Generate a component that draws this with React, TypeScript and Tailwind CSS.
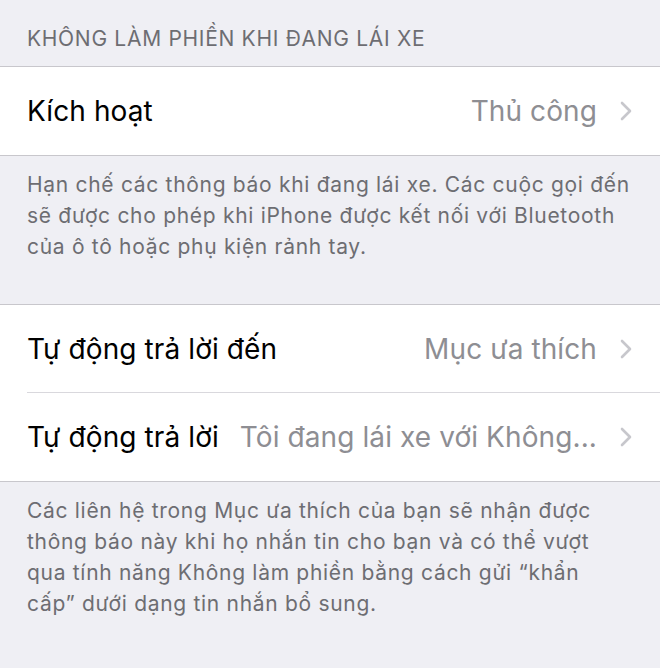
import React from "react";

function Chevron() {
  return (
    <svg width="14" height="20" viewBox="0 0 14 20" className="shrink-0">
      <path d="M3 2 L11 10 L3 18" fill="none" stroke="#c7c7cc" strokeWidth="2.6" strokeLinecap="round" strokeLinejoin="round" />
    </svg>
  );
}

function Row({ label, value, last }: { label: string; value: string; last?: boolean }) {
  return (
    <div className="pl-[27px] bg-white">
      <div className={`h-[88px] flex items-center pr-[27px] ${last ? "" : "border-b border-[#d9d8dd]"}`}>
        <span className="text-[28px] text-black whitespace-nowrap tracking-[0.1px]">{label}</span>
        <span className="flex-1 min-w-0 text-right text-[28px] text-[#8e8e93] whitespace-nowrap overflow-hidden pl-[20px] tracking-[0.1px]">
          {value}
        </span>
        <span className="ml-[22px] flex items-center">
          <Chevron />
        </span>
      </div>
    </div>
  );
}

export default function App() {
  return (
    <div className="w-[660px] h-[668px] bg-[#efeff4] font-['Inter','Liberation_Sans',sans-serif] overflow-hidden">
      <div className="h-[66px] px-[27px] flex items-end pb-[12px] text-[21px] text-[#6d6d72] tracking-[0.7px]">
        KHÔNG LÀM PHIỀN KHI ĐANG LÁI XE
      </div>
      <div className="border-y border-[#c8c7cc]">
        <Row label="Kích hoạt" value="Thủ công" last />
      </div>
      <div className="h-[148px] px-[27px] pt-[13px] text-[21px] leading-[31px] text-[#6d6d72] tracking-[0.7px]">
        Hạn chế các thông báo khi đang lái xe. Các cuộc gọi đến sẽ được cho phép khi iPhone được kết nối với Bluetooth của ô tô hoặc phụ kiện rảnh tay.
      </div>
      <div className="border-y border-[#c8c7cc]">
        <Row label="Tự động trả lời đến" value="Mục ưa thích" />
        <Row label="Tự động trả lời" value="Tôi đang lái xe với Không..." last />
      </div>
      <div className="px-[27px] pt-[13px] text-[21px] leading-[31px] text-[#6d6d72] tracking-[0.7px]">
        Các liên hệ trong Mục ưa thích của bạn sẽ nhận được thông báo này khi họ nhắn tin cho bạn và có thể vượt qua tính năng Không làm phiền bằng cách gửi “khẩn cấp” dưới dạng tin nhắn bổ sung.
      </div>
    </div>
  );
}
